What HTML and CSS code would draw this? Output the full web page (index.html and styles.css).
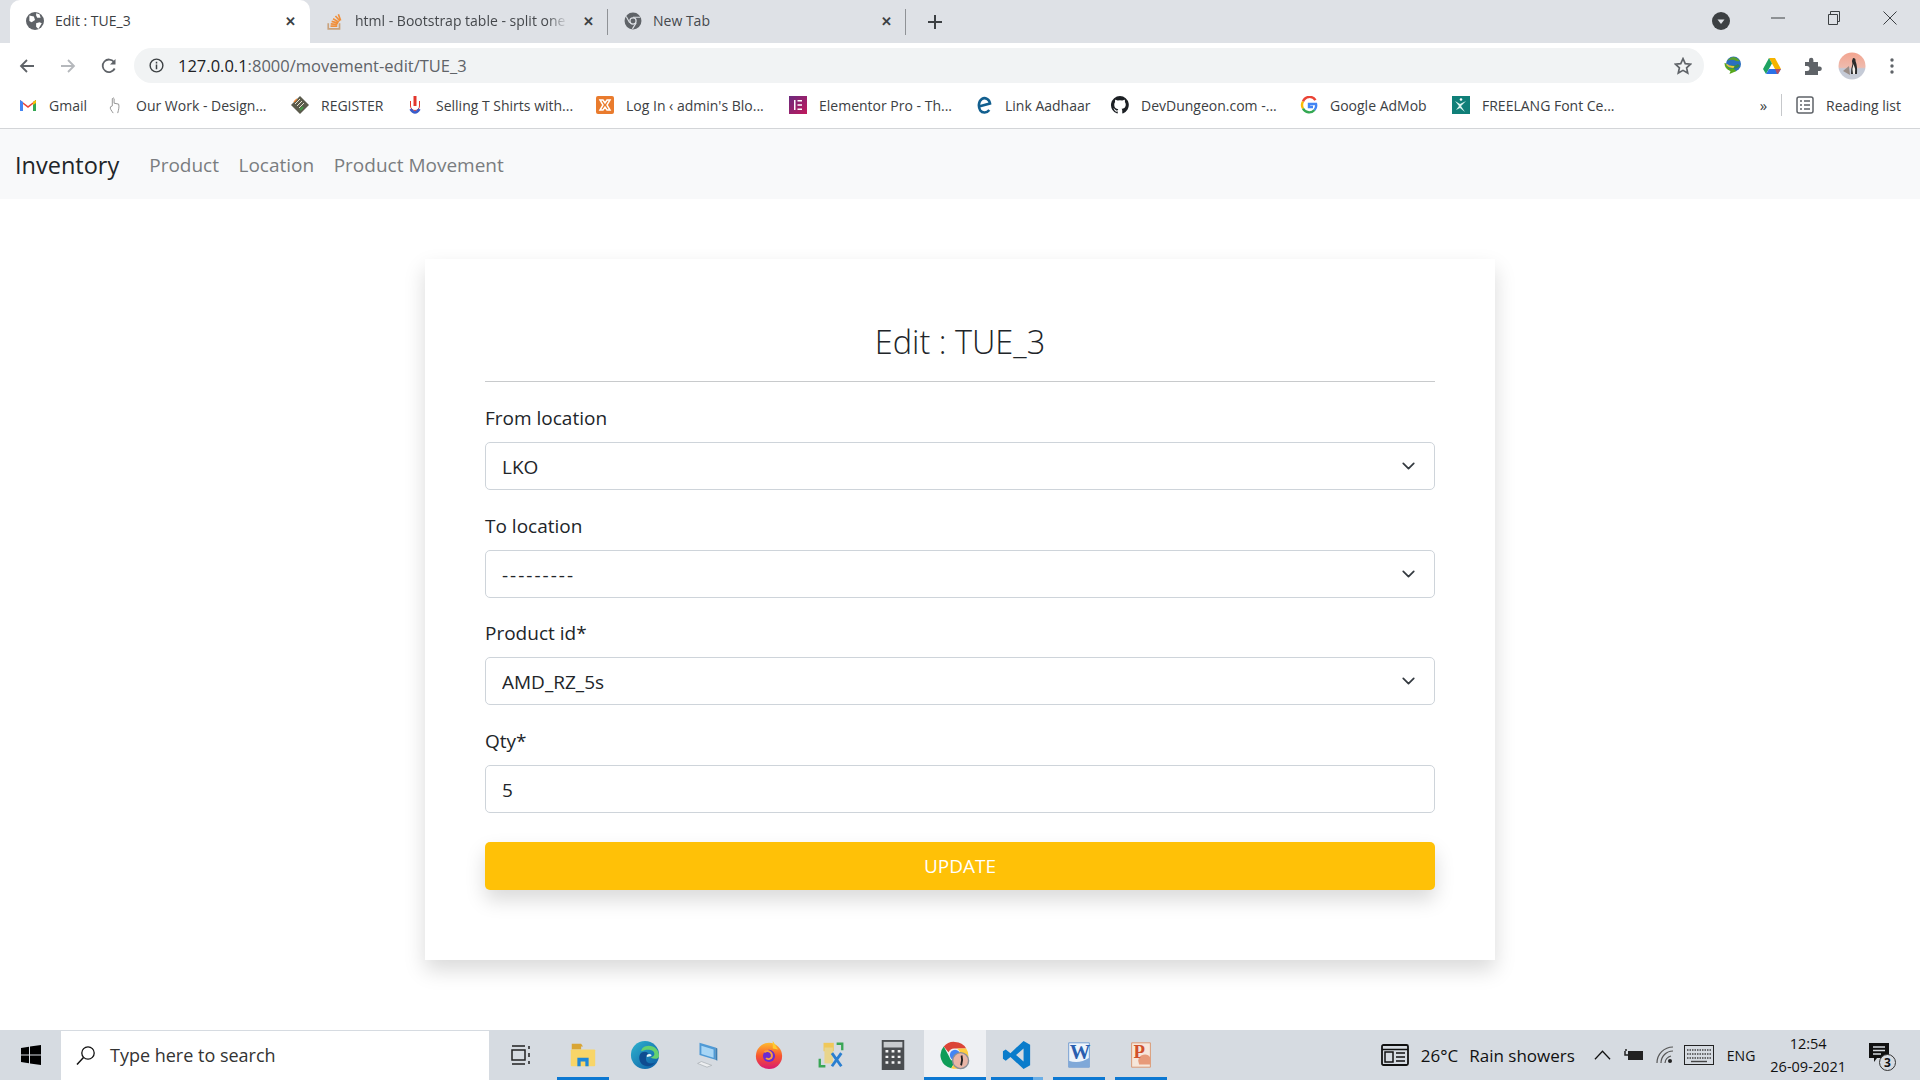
FILE: index.html
```html
<!DOCTYPE html>
<html lang="en">
<head>
  <meta charset="UTF-8">
  <title>Edit : TUE_3</title>
  <link rel="stylesheet" href="styles.css">
</head>
<body>

  <!-- browser tabs -->
  <div class="tabstrip">
    <div class="tab tab-active">
      <svg class="fav" viewBox="0 0 16 16"><circle cx="8" cy="8" r="8" fill="#5f6368"/><path d="M3 3l4 1 1 3-3 2-2-1zM9 10l3-1 2 1-3 5-2-2zM9 1l3 1 1 3-3 0-1-2z" fill="#fff"/></svg>
      <span class="tab-title">Edit : TUE_3</span>
      <span class="tab-x">✕</span>
    </div>
    <div class="tab tab-so">
      <svg class="fav" viewBox="0 0 16 16"><path d="M2 10v5h10v-5" fill="none" stroke="#c9a27c" stroke-width="1.5"/><path d="M4 12.5h6M4.2 10.5l6 .6M5 8.3l5.8 1.6M6.3 6l5.2 3M8.4 3.6l4 4.4M11 2l2 5.500" stroke="#f0903c" stroke-width="1.500" fill="none"/></svg>
      <span class="tab-title tab-fade">html - Bootstrap table - split one</span>
      <span class="tab-x">✕</span>
    </div>
    <div class="tab tab-new">
      <svg class="fav" viewBox="0 0 16 16"><circle cx="8" cy="8" r="7.500" fill="#5f6368"/><circle cx="8" cy="8" r="3.300" fill="#dee1e6"/><circle cx="8" cy="8" r="2.200" fill="#5f6368"/><path d="M8 4.700h6.500M5 9.500L2 4M10.800 9.700L7.500 15" stroke="#dee1e6" stroke-width="1"/></svg>
      <span class="tab-title">New Tab</span>
      <span class="tab-x">✕</span>
    </div>
    <span class="tab-plus">
      <svg viewBox="0 0 14 14"><path d="M7 0v14M0 7h14" stroke="#3c4043" stroke-width="2"/></svg>
    </span>
    <div class="win-controls">
      <svg class="win-search" viewBox="0 0 18 18"><circle cx="9" cy="9" r="9" fill="#3c4043"/><path d="M5.500 7.500h7L9 12z" fill="#dee1e6"/></svg>
      <svg class="win-btn" viewBox="0 0 14 14"><path d="M0 7h14" stroke="#3c4043" stroke-width="1"/></svg>
      <svg class="win-btn" viewBox="0 0 14 14"><path d="M1.500 3.500h9v10h-9zM3.500 3.500v-3h9v10h-2" fill="none" stroke="#3c4043" stroke-width="1"/></svg>
      <svg class="win-btn" viewBox="0 0 14 14"><path d="M.5.500l13 13M13.500.500l-13 13" stroke="#3c4043" stroke-width="1"/></svg>
    </div>
  </div>

  <!-- address bar -->
  <div class="toolbar">
    <svg class="nav-ico" viewBox="0 0 16 16"><path d="M15 8H2M8 2L2 8l6 6" fill="none" stroke="#5f6368" stroke-width="1.800"/></svg>
    <svg class="nav-ico" viewBox="0 0 16 16"><path d="M1 8h13M8 2l6 6-6 6" fill="none" stroke="#b5b8bc" stroke-width="1.800"/></svg>
    <svg class="nav-ico" viewBox="0 0 16 16"><path d="M13.700 10.500A6.300 6.300 0 1 1 13 4" fill="none" stroke="#5f6368" stroke-width="1.800"/><path d="M14.500 1v5.500H9z" fill="#5f6368"/></svg>
    <div class="omnibox">
      <svg class="info-ico" viewBox="0 0 16 16"><circle cx="8" cy="8" r="6.800" fill="none" stroke="#3c4043" stroke-width="1.500"/><path d="M8 7v5M8 4v1.800" stroke="#3c4043" stroke-width="1.600"/></svg>
      <span class="url"><b>127.0.0.1</b>:8000/movement-edit/TUE_3</span>
      <svg class="star-ico" viewBox="0 0 16 16"><path d="M8 1.500l2 4.400 4.700.5-3.500 3.200 1 4.700L8 11.900l-4.200 2.400 1-4.700L1.300 6.400 6 5.900z" fill="none" stroke="#5f6368" stroke-width="1.500"/></svg>
    </div>
    <div class="ext-icons">
      <svg class="ext" viewBox="0 0 20 20"><circle cx="11.500" cy="8" r="7.500" fill="#2a6fc0"/><path d="M5 5q3-4 7-4 4 1 6 4-3 1-6-1-3-1-7 1z" fill="#5aa02c"/><path d="M9 9q3 2 7-1l2 2q-4 4-10 2z" fill="#35884a"/><path d="M2.500 7q0 6 6 8l-1 3 7-3-5-4v2q-4-1-6-6z" fill="#58a81c"/><path d="M4.500 7.500q3 3 8 2.500l-1 2q-5 0-7-3z" fill="#e9c93a"/></svg>
      <svg class="ext" viewBox="0 0 20 20"><path d="M7 2h6l6 11h-6z" fill="#f5b400"/><path d="M7 2l3 5.500L4 18l-3-5z" fill="#1ea362"/><path d="M7 13h12l-3 5H4z" fill="#2a71e8"/><path d="M13 13h6l-3 5h-1z" fill="#e2443a" opacity=".75"/></svg>
      <svg class="ext" viewBox="0 0 20 20"><path d="M3 6h4V4a2.200 2.200 0 0 1 4.400 0v2H16v4.500h2a2.300 2.300 0 0 1 0 4.500h-2v4H3v-4h2a2.500 2.500 0 0 0 0-5H3z" fill="#5f6368"/></svg>
      <svg class="avatar" viewBox="0 0 28 28"><defs><linearGradient id="av" x1="0" y1="0" x2="0" y2="1"><stop offset="0" stop-color="#f3a48f"/><stop offset=".55" stop-color="#eebbae"/><stop offset=".6" stop-color="#c3c9d6"/><stop offset="1" stop-color="#c8ccd6"/></linearGradient></defs><circle cx="14" cy="14" r="13.500" fill="url(#av)"/><path d="M5 19l6-5 1 9z" fill="#9a8d86"/><path d="M15 6q3 0 2.500 3 2 5 1.500 13h-6q0-6 1.500-10-1-4 .500-6z" fill="#2b2b2b"/><path d="M15.500 12q-2 5-.5 10h2q1-5-1.500-10z" fill="#f2ede8"/></svg>
      <svg class="dots" viewBox="0 0 4 16"><circle cx="2" cy="2" r="1.700" fill="#5f6368"/><circle cx="2" cy="8" r="1.700" fill="#5f6368"/><circle cx="2" cy="14" r="1.700" fill="#5f6368"/></svg>
    </div>
  </div>

  <!-- bookmarks -->
  <div class="bookmarks">
    <span class="bm"><svg class="bm-ico" viewBox="0 0 18 14"><path d="M1 13V2l8 6 8-6v11h-3V6L9 10 4 6v7z" fill="#ea4335"/><path d="M1 13V2l3 2v9z" fill="#4285f4"/><path d="M17 13V2l-3 2v9z" fill="#34a853"/><path d="M14 4l3-2v3l-3 2z" fill="#fbbc04"/></svg>Gmail</span>
    <span class="bm"><svg class="bm-ico" viewBox="0 0 18 20"><path d="M7 19c-2-3-4-5-3-7l2-1V3q1-2 2 0v5l5 1c1 3 0 6-1 10" fill="none" stroke="#8a8a8a" stroke-width="1"/></svg>Our Work - Design...</span>
    <span class="bm"><svg class="bm-ico" viewBox="0 0 18 18"><path d="M9 0l9 9-9 9-9-9z" fill="#5b5b4c"/><path d="M4 8l5-5M6 10l5-5M8 12l5-5" stroke="#e9e4d0" stroke-width="1"/><path d="M9 14l3-3" stroke="#3f9a42" stroke-width="2"/><path d="M3 6l3-3" stroke="#e98534" stroke-width="1.500"/></svg>REGISTER</span>
    <span class="bm"><svg class="bm-ico" viewBox="0 0 18 18"><path d="M9 0v10" stroke="#e2362c" stroke-width="3"/><path d="M4.500 5v5a4.500 4.500 0 0 0 9 0V5" fill="none" stroke="#e2362c" stroke-width="1"/><path d="M4.500 13q4.500 7 9 0" fill="none" stroke="#3a5cc9" stroke-width="2.500"/></svg>Selling T Shirts with...</span>
    <span class="bm"><svg class="bm-ico" viewBox="0 0 18 18"><rect width="18" height="18" rx="2" fill="#e97b2d"/><path d="M4 4h3l2 3 2-3h3L11 9l3 5h-3L9 11l-2 3H4l3-5z" fill="none" stroke="#fff" stroke-width="1.500"/></svg>Log In ‹ admin's Blo...</span>
    <span class="bm"><svg class="bm-ico" viewBox="0 0 18 18"><defs><linearGradient id="el" x1="0" y1="0" x2="1" y2="1"><stop offset="0" stop-color="#6a2a7e"/><stop offset="1" stop-color="#c2185b"/></linearGradient></defs><rect width="18" height="18" fill="url(#el)"/><path d="M5 4h1.500v10H5zM8.500 4H13v1.500H8.500zM8.500 8.200H13v1.500H8.500zM8.500 12.500H13V14H8.500z" fill="#fff"/></svg>Elementor Pro - Th...</span>
    <span class="bm"><svg class="bm-ico" viewBox="0 0 18 18"><path d="M3.800 10.500L15 7.500C14.500 3 10 1 7 2.800 3.500 5 3 11 5.300 14.500c2 2.800 6.500 2.800 9-.5" fill="none" stroke="#125f8f" stroke-width="2.600"/></svg>Link Aadhaar</span>
    <span class="bm"><svg class="bm-ico" viewBox="0 0 16 16"><path d="M8 0a8 8 0 0 0-2.500 15.600c.4.100.5-.2.500-.4v-1.400c-2.200.5-2.700-1-2.700-1-.4-.9-.9-1.200-.9-1.200-.7-.5.100-.5.100-.5.800.1 1.200.8 1.200.8.700 1.200 1.900.9 2.300.7.100-.5.300-.9.500-1.100-1.800-.2-3.600-.9-3.600-4 0-.9.300-1.600.8-2.100-.1-.2-.4-1 .1-2.100 0 0 .7-.2 2.200.8a7.600 7.600 0 0 1 4 0c1.500-1 2.200-.8 2.200-.8.400 1.100.2 1.900.1 2.100.5.600.8 1.300.8 2.100 0 3.100-1.900 3.700-3.700 3.900.3.300.6.800.6 1.500v2.200c0 .2.100.5.600.4A8 8 0 0 0 8 0z" fill="#1b1f23"/></svg>DevDungeon.com -...</span>
    <span class="bm"><svg class="bm-ico" viewBox="0 0 18 18"><path d="M15.500 4.200A7 7 0 0 0 3 5.500" fill="none" stroke="#ea4335" stroke-width="2.400"/><path d="M3 5.500a7 7 0 0 0 0 7" fill="none" stroke="#fbbc05" stroke-width="2.400"/><path d="M3 12.500a7 7 0 0 0 11.500 1.500" fill="none" stroke="#34a853" stroke-width="2.400"/><path d="M14.500 14A7 7 0 0 0 16 8H9v3h4" fill="none" stroke="#4285f4" stroke-width="2.400"/></svg>Google AdMob</span>
    <span class="bm"><svg class="bm-ico" viewBox="0 0 18 18"><rect width="18" height="18" fill="#0f7f78"/><circle cx="9" cy="3.500" r="1.300" fill="#fff"/><path d="M3 5l5 3 6-3-5 5 4 6-5-4-4 2 3-4z" fill="#d9f2ee"/></svg>FREELANG Font Ce...</span>
    <span class="bm-more">»</span>
    <span class="bm-sep"></span>
    <span class="bm bm-reading"><svg class="bm-ico" viewBox="0 0 18 18"><rect x="1" y="1" width="16" height="16" rx="2" fill="none" stroke="#5f6368" stroke-width="1.500"/><path d="M4 5h2M8 5h6M4 9h2M8 9h6M4 13h2M8 13h6" stroke="#5f6368" stroke-width="1.500"/></svg>Reading list</span>
  </div>

  <!-- page -->
  <nav class="navbar">
    <a class="navbar-brand">Inventory</a>
    <a class="nav-link">Product</a>
    <a class="nav-link">Location</a>
    <a class="nav-link">Product Movement</a>
  </nav>

  <main class="content">
    <form class="card">
      <h2 class="card-title">Edit : TUE_3</h2>
      <div class="field">
        <label>From location</label>
        <select class="control"><option>LKO</option></select>
      </div>
      <div class="field">
        <label>To location</label>
        <select class="control control-dashes"><option>---------</option></select>
      </div>
      <div class="field">
        <label>Product id*</label>
        <select class="control"><option>AMD_RZ_5s</option></select>
      </div>
      <div class="field">
        <label>Qty*</label>
        <input class="control" type="text" value="5">
      </div>
      <button class="btn-update" type="button">UPDATE</button>
    </form>
  </main>

  <!-- windows taskbar -->
  <div class="taskbar">
    <span class="start">
      <svg viewBox="0 0 20 20"><path d="M0 3l8-1.200V9.500H0zM9 1.600L20 0v9.500H9zM0 10.500h8v7.700L0 17zM9 10.500h11V20L9 18.400z" fill="#000"/></svg>
    </span>
    <div class="searchbox">
      <svg viewBox="0 0 20 20"><circle cx="12" cy="8" r="6.200" fill="none" stroke="#111" stroke-width="1.300"/><path d="M7.500 12.500L1 19.500" stroke="#111" stroke-width="1.500"/></svg>
      <span>Type here to search</span>
    </div>
    <div class="task-apps">
      <span class="app app-view"><svg viewBox="0 0 20 20"><path d="M1 1h13M1 19h13M1 5h13v10H1zM18 1v3M18 8v4M18 16v3" fill="none" stroke="#222" stroke-width="1.500"/></svg></span>
      <span class="app app-open"><svg viewBox="0 0 32 32"><path d="M4 4h10l2 3H14v3H4z" fill="#d9a535"/><rect x="3" y="10" width="26" height="18" rx="1" fill="#f8d568"/><path d="M10 28v-9h12v9h-3.500v-5h-5v5z" fill="#1e88d8"/></svg></span>
      <span class="app"><svg viewBox="0 0 32 32"><defs><linearGradient id="ed" x1="0" y1="0" x2="1" y2="1"><stop offset="0" stop-color="#2fb4cf"/><stop offset="1" stop-color="#0c59a4"/></linearGradient></defs><circle cx="16" cy="16" r="15" fill="url(#ed)"/><path d="M31 17c0-7-5-11-11-11-5 0-8 3-8 6 4-2 14-3 14 3 0 2-2 3-4 4 5 2 9 1 9-2z" fill="#66d16f"/><path d="M13 13c-4 2-4 8-1 12 4 4 11 4 15-1-5 2-10 1-10-4 0-2 1-4 3-5-2-3-4-3-7-2z" fill="#0f4c91"/><path d="M18 18q-1-3 3-3 2 0 2 2z" fill="#e8f6f4"/></svg></span>
      <span class="app"><svg viewBox="0 0 32 32"><path d="M8 3l17 5v13L8 16z" fill="#4f9ad6"/><path d="M10 6l13 4v9l-13-4z" fill="#a8d6f5"/><path d="M25 8l2 1v13l-2-1z" fill="#3c7db0"/><path d="M6 25l10 4 5-2-11-4z" fill="#eceef0" stroke="#9aa0a6" stroke-width=".6"/></svg></span>
      <span class="app"><svg viewBox="0 0 32 32"><defs><linearGradient id="ff" x1="0" y1="0" x2="0" y2="1"><stop offset="0" stop-color="#ffb92e"/><stop offset=".5" stop-color="#f7562f"/><stop offset="1" stop-color="#d91a72"/></linearGradient></defs><circle cx="16" cy="17" r="14" fill="url(#ff)"/><path d="M20 1c3 4 3 6 6 9l-6-1z" fill="#ffcb2e"/><circle cx="16" cy="17" r="6.500" fill="#6a2bd1"/><path d="M11 13c4-3 9 0 8 5-1 3-5 3-6 1" fill="none" stroke="#f8a13c" stroke-width="2"/></svg></span>
      <span class="app"><svg viewBox="0 0 32 32"><path d="M8 3h11v9H8z" fill="#f0c85a"/><path d="M9 8h9v17H9z" fill="#e9d58c"/><path d="M22 4h6v7M4 20v8h6" fill="none" stroke="#3aa655" stroke-width="2.500"/><path d="M17 14l10 14M27 14L17 28" stroke="#2a7fd0" stroke-width="3"/></svg></span>
      <span class="app"><svg viewBox="0 0 24 32"><rect width="24" height="32" fill="#4a4d50"/><rect x="2" y="2" width="20" height="6" fill="#c8cbce"/><path d="M4 12h3M10.500 12h3M17 12h3M4 18h3M10.500 18h3M17 18h3M4 24h3M10.500 24h3M17 24h3" stroke="#f3f3f3" stroke-width="2.600"/></svg></span>
      <span class="app app-open app-active"><svg viewBox="0 0 32 32"><path d="M16 2a14 14 0 0 1 12 7H16a7 7 0 0 0-7 4L4 7a14 14 0 0 1 12-5z" fill="#db4437"/><path d="M4 7l6 11a7 7 0 0 0 6 5l-4 7A14 14 0 0 1 4 7z" fill="#0f9d58"/><path d="M28 9a14 14 0 0 1-16 21l6-9a7 7 0 0 0 0-12z" fill="#ffcd40"/><circle cx="16" cy="16" r="5.500" fill="#4285f4"/><circle cx="22" cy="22" r="8.500" fill="#e9b5a6" stroke="#8a8f96" stroke-width="1.500"/><path d="M23 16.500q1.500 5-.5 10.500" stroke="#222" stroke-width="2" fill="none"/></svg></span>
      <span class="app app-open app-split"><svg viewBox="0 0 32 32"><path d="M23 1l7 4v22l-7 4L9 18l-5 4-3-2v-8l3-2 5 4zM23 9l-8 7 8 7z" fill="#0a7ccb"/></svg></span>
      <span class="app app-open"><svg viewBox="0 0 32 32"><path d="M5 3h22v26H5z" fill="#eef4fb" stroke="#6f9ad0" stroke-width="1"/><path d="M5 22q11 4 22-3v10H5z" fill="#7fa8d8"/><text x="6" y="20" class="app-letter word-letter">W</text></svg></span>
      <span class="app app-open"><svg viewBox="0 0 32 32"><path d="M6 3h20v26H6z" fill="#f6e6da" stroke="#d99570" stroke-width="1"/><path d="M13 22a7 7 0 0 1 13-3v7H14z" fill="#e79a79"/><text x="8" y="19" class="app-letter ppt-letter">P</text></svg></span>
    </div>
    <div class="tray">
      <svg class="tray-news" viewBox="0 0 28 22"><rect x="1" y="1" width="26" height="20" rx="1.500" fill="none" stroke="#111" stroke-width="1.800"/><path d="M1 5.500h26" stroke="#111" stroke-width="1.500"/><rect x="4" y="8" width="8" height="10" fill="none" stroke="#111" stroke-width="1.500"/><path d="M15 9h9M15 13h9M15 17h9" stroke="#111" stroke-width="1.500"/></svg>
      <span class="tray-temp">26°C</span>
      <span class="tray-weather">Rain showers</span>
      <svg class="tray-caret" viewBox="0 0 18 10"><path d="M1 9.500L9 1l8 8.500" fill="none" stroke="#111" stroke-width="1.300"/></svg>
      <svg class="tray-batt" viewBox="0 0 20 14"><rect x="4" y="3" width="15" height="9" fill="#222"/><path d="M1 3v4h3M2 1v2" stroke="#222" stroke-width="1.500" fill="none"/></svg>
      <svg class="tray-wifi" viewBox="0 0 18 18"><path d="M1 17A16 16 0 0 1 17 1M5 17A12 12 0 0 1 17 5M9 17a8 8 0 0 1 6-7" fill="none" stroke="#555" stroke-width="1.200"/><circle cx="14" cy="15" r="2" fill="#222"/></svg>
      <svg class="tray-kbd" viewBox="0 0 30 20"><rect x=".5" y=".5" width="29" height="19" fill="none" stroke="#222"/><path d="M3 5h24M3 9h24M3 13h24" stroke="#444" stroke-width="1.400" stroke-dasharray="1.500 1"/><path d="M7 16.500h16" stroke="#444" stroke-width="1.400"/></svg>
      <span class="tray-lang">ENG</span>
      <div class="tray-clock"><span>12:54</span><span>26-09-2021</span></div>
      <span class="tray-notif">
        <svg viewBox="0 0 22 22"><path d="M1 1h20v15H9l-3 4v-4H1z" fill="#111"/><path d="M5 5h12M5 8.500h12M5 12h8" stroke="#d5dae0" stroke-width="1.300"/></svg>
        <span class="notif-badge">3</span>
      </span>
    </div>
  </div>

</body>
</html>
```

FILE: styles.css
```css
html, body {
  height: 100%;
}

body {
  margin: 0;
  height: 1080px;
  display: flex;
  flex-direction: column;
  overflow: hidden;
  background-color: #fff;
  font-family: "Open Sans", "Noto Sans", sans-serif;
  color: #212529;
}

svg {
  display: block;
  flex: none;
}

/* tabs */
.tabstrip {
  height: 43px;
  background-color: #dee1e6;
  display: flex;
  padding-left: 10px;
  flex: none;
}

.tab {
  display: flex;
  align-items: center;
  height: 43px;
  padding-bottom: 2px;
  font-size: 14px;
  color: #45484c;
  position: relative;
  box-sizing: border-box;
  white-space: nowrap;
}

.tab-active {
  width: 300px;
  background-color: #fff;
  border-radius: 10px 10px 0 0;
  padding-left: 16px;
  color: #3c4043;
}

.tab-so,
.tab-new {
  width: 298px;
  padding-left: 16px;
}

.tab-so::after,
.tab-new::after {
  content: "";
  position: absolute;
  right: 0;
  top: 9px;
  width: 1px;
  height: 26px;
  background-color: #8f9296;
}

.fav {
  width: 18px;
  height: 18px;
  margin-right: 11px;
}

.tab-title {
  flex: 1;
  overflow: hidden;
}

.tab-fade {
  -webkit-mask-image: linear-gradient(to right, #000 90%, transparent);
  mask-image: linear-gradient(to right, #000 90%, transparent);
}

.tab-x {
  width: 40px;
  text-align: center;
  font-size: 13px;
  font-weight: 700;
  color: #3c4043;
}

.tab-plus {
  margin-left: 22px;
  display: flex;
  align-items: center;
}

.tab-plus svg {
  width: 14px;
  height: 14px;
}

.win-controls {
  margin-left: auto;
  display: flex;
  align-items: center;
  height: 36px;
  padding-right: 23px;
  gap: 42px;
}

.win-search {
  width: 18px;
  height: 18px;
  margin-top: 6px;
  margin-right: -1px;
}

.win-btn {
  width: 14px;
  height: 14px;
}

/* toolbar */
.toolbar {
  height: 45px;
  display: flex;
  align-items: center;
  padding-left: 19px;
  flex: none;
  box-sizing: border-box;
}

.nav-ico {
  width: 16px;
  height: 16px;
  margin-right: 25px;
}

.omnibox {
  margin-left: -8px;
  width: 1570px;
  height: 35px;
  box-sizing: border-box;
  background-color: #f1f3f4;
  border-radius: 18px;
  display: flex;
  align-items: center;
  padding: 0 12px 0 15px;
}

.info-ico {
  width: 15px;
  height: 15px;
  margin-right: 14px;
}

.url {
  font-size: 16.500px;
  color: #5f6368;
  flex: 1;
}

.url b {
  font-weight: 400;
  color: #202124;
}

.star-ico {
  width: 18px;
  height: 18px;
}

.ext-icons {
  display: flex;
  align-items: center;
  margin-left: 18px;
}

.ext {
  width: 20px;
  height: 20px;
  margin-right: 20px;
}

.avatar {
  width: 28px;
  height: 28px;
  margin-left: -4px;
  margin-right: 24px;
}

.dots {
  width: 4px;
  height: 16px;
}

/* bookmarks */
.bookmarks {
  height: 41px;
  flex: none;
  box-sizing: border-box;
  border-bottom: 1px solid #d3d5d8;
  display: grid;
  grid-template-columns: 87px 185px 115px 190px 193px 186px 136px 189px 152px 1fr auto auto auto;
  align-items: center;
  padding: 0 19px 6px 19px;
  font-size: 14px;
  color: #3c4043;
}

.bm {
  display: flex;
  align-items: center;
  white-space: nowrap;
}

.bm-ico {
  width: 18px;
  height: 18px;
  margin-right: 12px;
}

.bm-more {
  grid-column: 11;
  font-size: 15px;
  grid-row: 1;
  margin-right: 14px;
}

.bm-sep {
  width: 1px;
  height: 22px;
  background-color: #c6c8cb;
  margin-right: 14px;
}

/* navbar */
.navbar {
  height: 70px;
  flex: none;
  box-sizing: border-box;
  padding: 2px 0 0 15px;
  background-color: #f8f9fa;
  display: flex;
  align-items: center;
}

.navbar-brand {
  font-size: 23.500px;
  color: #212529;
  margin-right: 30px;
}

.nav-link {
  font-size: 19px;
  color: #7a7d80;
  margin-right: 19.500px;
}

/* form card */
.content {
  flex: 1;
  display: flex;
  justify-content: center;
  padding-top: 60px;
  box-sizing: border-box;
}

.card {
  width: 1070px;
  height: 701px;
  box-sizing: border-box;
  background-color: #fff;
  padding: 0 60px;
  box-shadow: 0 10px 20px rgba(0, 0, 0, 0.15);
}

.card-title {
  margin: 0 0 16px 0;
  height: 123px;
  line-height: 166px;
  box-sizing: border-box;
  text-align: center;
  font-size: 32.500px;
  font-weight: 300;
  color: #212529;
  border-bottom: 1px solid #c8cacc;
}

.field {
  height: 107.600px;
}

.field label {
  display: block;
  height: 44px;
  line-height: 40px;
  font-size: 19px;
}

.control {
  display: block;
  width: 100%;
  height: 48px;
  box-sizing: border-box;
  padding: 2px 16px 0;
  font-family: inherit;
  font-size: 19px;
  color: #212529;
  background-color: #fff;
  border: 1px solid #ced4da;
  border-radius: 5px;
  appearance: none;
  -webkit-appearance: none;
}

.control-dashes {
  letter-spacing: 2px;
}

select.control {
  background-image: url("data:image/svg+xml,%3csvg xmlns='http://www.w3.org/2000/svg' viewBox='0 0 16 16'%3e%3cpath fill='none' stroke='%23343a40' stroke-linecap='round' stroke-linejoin='round' stroke-width='2' d='M2 5l6 6 6-6'/%3e%3c/svg%3e");
  background-repeat: no-repeat;
  background-position: right 16px center;
  background-size: 19px 14px;
}

.btn-update {
  display: block;
  width: 100%;
  height: 48px;
  margin-top: 14px;
  border: none;
  border-radius: 5px;
  background-color: #ffc107;
  color: #fff;
  font-family: inherit;
  font-size: 19px;
  box-shadow: 0 10px 20px rgba(0, 0, 0, 0.15);
}

/* taskbar */
.taskbar {
  height: 50px;
  flex: none;
  background-color: #d6dbe1;
  display: flex;
  align-items: stretch;
  color: #111;
}

.start {
  width: 61px;
  display: flex;
  align-items: center;
  justify-content: center;
}

.start svg {
  width: 20px;
  height: 20px;
}

.searchbox {
  width: 428px;
  background-color: #fff;
  margin-top: 1px;
  display: flex;
  align-items: center;
  padding: 0 0 2px 15px;
  box-sizing: border-box;
  font-size: 18px;
  color: #333;
}

.searchbox svg {
  width: 20px;
  height: 20px;
  margin-right: 14px;
}

.task-apps {
  display: flex;
  margin-left: 1px;
}

.app {
  width: 62px;
  display: flex;
  align-items: center;
  justify-content: center;
  position: relative;
  box-sizing: border-box;
}

.app svg {
  width: 30px;
  height: 30px;
}

.app-view svg {
  width: 20px;
  height: 20px;
}

.app-open::after {
  content: "";
  position: absolute;
  left: 5px;
  right: 5px;
  bottom: 0;
  height: 3px;
  background-color: #0c78d2;
}

.app-active {
  background-color: #eef0f3;
}

.app-active::after {
  left: 0;
  right: 0;
}

.app-split::before {
  content: "";
  position: absolute;
  right: 5px;
  bottom: 0;
  width: 10px;
  height: 3px;
  background-color: #6aaee6;
  z-index: 1;
}

.app-letter {
  font-family: "Liberation Serif", serif;
  font-weight: 700;
}

.word-letter {
  font-size: 22px;
  fill: #2a5fb0;
}

.ppt-letter {
  font-size: 20px;
  fill: #d1502a;
}

.tray {
  margin-left: auto;
  display: flex;
  align-items: center;
  padding-right: 24px;
  font-size: 17px;
}

.tray-news {
  width: 28px;
  height: 22px;
  margin-right: 12px;
}

.tray-temp {
  margin-right: 11px;
}

.tray-weather {
  margin-right: 19px;
}

.tray-caret {
  width: 17px;
  height: 10px;
  margin-right: 13px;
}

.tray-batt {
  width: 20px;
  height: 14px;
  margin-right: 12px;
}

.tray-wifi {
  width: 18px;
  height: 18px;
  margin-right: 10px;
}

.tray-kbd {
  width: 30px;
  height: 20px;
  margin-right: 13px;
}

.tray-lang {
  font-size: 14px;
  margin-right: 15px;
}

.tray-clock {
  display: flex;
  flex-direction: column;
  align-items: center;
  gap: 4px;
  font-size: 14.500px;
  margin-right: 22px;
}

.tray-notif {
  position: relative;
  width: 28px;
  height: 28px;
}

.tray-notif svg {
  width: 22px;
  height: 24px;
}

.notif-badge {
  position: absolute;
  right: 0;
  bottom: -2px;
  width: 17px;
  height: 17px;
  box-sizing: border-box;
  border: 1px solid #333;
  border-radius: 50%;
  background-color: #d6dbe1;
  font-size: 12px;
  font-weight: 700;
  line-height: 15px;
  text-align: center;
}
```
